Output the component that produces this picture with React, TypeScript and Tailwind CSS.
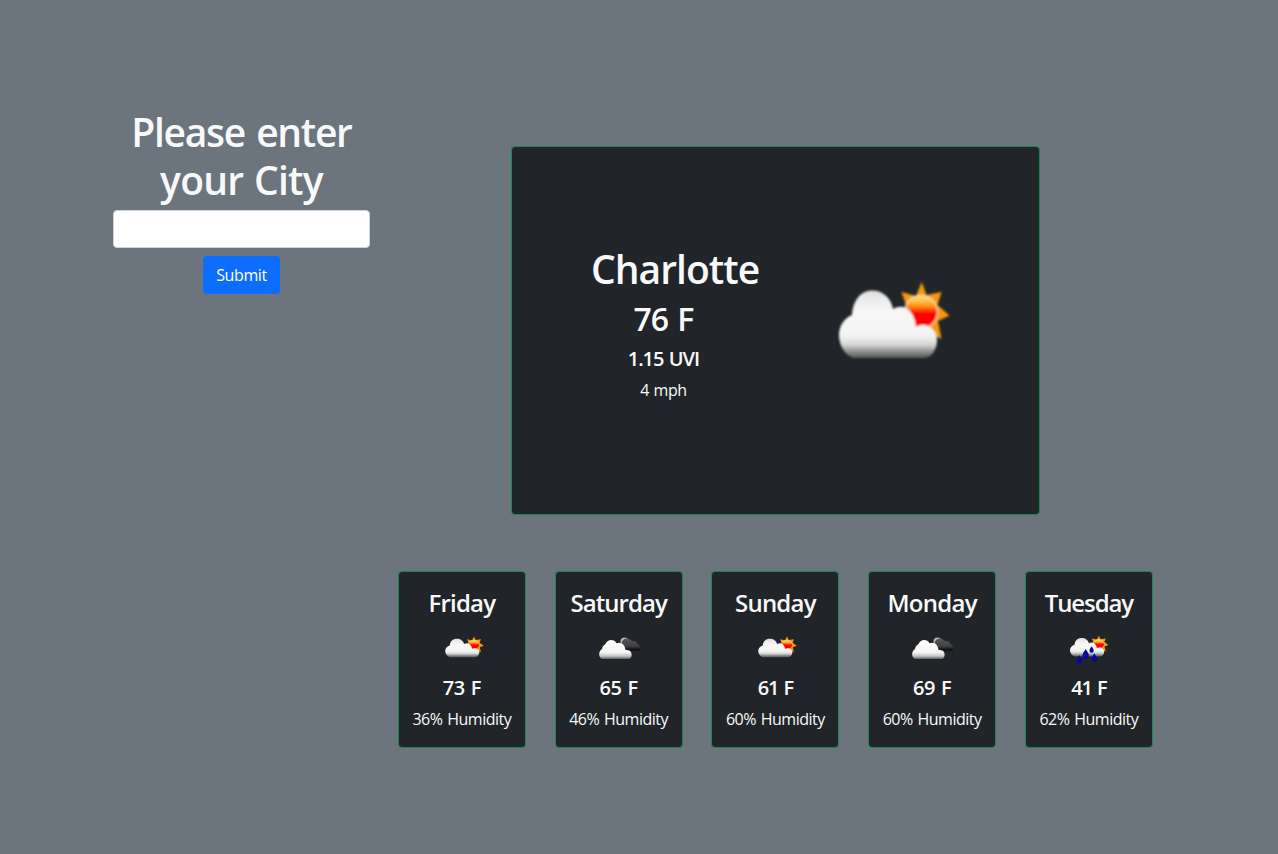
type IconKind = 'partly' | 'cloudy' | 'rain';

interface Day {
  name: string;
  icon: IconKind;
  temp: number;
  humidity: number;
  nameTracking: string;
  tempTracking: string;
}

const days: Day[] = [
  { name: 'Friday', icon: 'partly', temp: 73, humidity: 36, nameTracking: 'tracking-[-0.8px]', tempTracking: 'tracking-[-0.4px]' },
  { name: 'Saturday', icon: 'cloudy', temp: 65, humidity: 46, nameTracking: 'tracking-[-0.95px]', tempTracking: 'tracking-[-0.4px]' },
  { name: 'Sunday', icon: 'partly', temp: 61, humidity: 60, nameTracking: 'tracking-[-0.8px]', tempTracking: 'tracking-[-1.1px]' },
  { name: 'Monday', icon: 'cloudy', temp: 69, humidity: 60, nameTracking: 'tracking-[-0.7px]', tempTracking: 'tracking-[-0.4px]' },
  { name: 'Tuesday', icon: 'rain', temp: 41, humidity: 62, nameTracking: 'tracking-[-1.1px]', tempTracking: 'tracking-[-1.1px]' },
];

// Gradients shared by every weather icon on the page.
function IconDefs() {
  return (
    <svg width="0" height="0" className="absolute" aria-hidden="true">
      <defs>
        <linearGradient id="cloud" x1="0" y1="0" x2="0" y2="1">
          <stop offset="0" stopColor="#dcdcdc" />
          <stop offset="0.12" stopColor="#ebebeb" />
          <stop offset="0.35" stopColor="#f8f8f8" />
          <stop offset="0.68" stopColor="#f2f2f2" />
          <stop offset="0.8" stopColor="#d6d6d6" />
          <stop offset="0.92" stopColor="#858585" />
          <stop offset="1" stopColor="#555658" />
        </linearGradient>
        <linearGradient id="white" x1="0" y1="0" x2="0" y2="1">
          <stop offset="0" stopColor="#ffffff" />
          <stop offset="0.65" stopColor="#f4f4f4" />
          <stop offset="0.85" stopColor="#c4c4c4" />
          <stop offset="1" stopColor="#5c5c5c" />
        </linearGradient>
        <linearGradient id="dark" x1="0" y1="0" x2="0" y2="1">
          <stop offset="0" stopColor="#585858" />
          <stop offset="0.65" stopColor="#404040" />
          <stop offset="1" stopColor="#050505" />
        </linearGradient>
        <linearGradient id="sun" x1="0" y1="0" x2="0" y2="1">
          <stop offset="0" stopColor="#ffd978" />
          <stop offset="0.18" stopColor="#ffc04a" />
          <stop offset="0.34" stopColor="#ff8a10" />
          <stop offset="0.46" stopColor="#ff3c00" />
          <stop offset="0.54" stopColor="#ff0000" />
          <stop offset="1" stopColor="#ff0000" />
        </linearGradient>
        <filter id="soft" x="-10%" y="-10%" width="120%" height="120%">
          <feGaussianBlur stdDeviation="0.8" />
        </filter>
      </defs>
    </svg>
  );
}

function Sun() {
  return (
    <g>
      <path
        d="M101.700 12 L106.500 25 L121.500 22 L117.500 35 L129.500 45.500 L118 51 L121.500 69 L110 63 L90 55 L87 38 L81.500 22 L96 26 Z"
        fill="#f5980f"
      />
      <circle cx="101" cy="42" r="16.500" fill="url(#sun)" stroke="#f7d7a8" strokeWidth="1.300" />
    </g>
  );
}

function CloudShape() {
  return (
    <path
      d="M34 88 C25 86 19 75 19 65 C19 55 25 48 32 45 C33 30 41 20.500 52 20.500 C63 20.500 71 28 73 39 C83 33 94 39 96 57 C107 51 117 60 117 70 C117 79 112 87 105 88 Z"
      fill="url(#cloud)"
    />
  );
}

function PartlyArt() {
  return (
    <>
      <Sun />
      <CloudShape />
    </>
  );
}

function SmallIcon({ kind }: { kind: IconKind }) {
  return (
    <svg width="50" height="50" viewBox="0 0 50 50" className="block overflow-visible">
      {kind === 'partly' && (
        <g transform="translate(1.6 7.200) scale(0.3486 0.2738)">
          <PartlyArt />
        </g>
      )}
      {kind === 'cloudy' && (
        <g>
          <circle cx="30.500" cy="15.500" r="4" fill="#b5b5b5" />
          <path
            d="M28 20 C26.500 15 30.500 11.800 33.500 12.500 C36 12.800 37.500 14.300 38 15.300 C41 14.600 43 16 43 18 C46 18.500 46.800 22 45.500 24.500 H36 Z"
            fill="url(#dark)"
          />
          <path
            d="M8 33 C4.500 31.500 4 25.500 8 23 C8.800 19 10.500 19 11.500 18 C13.500 12.800 20.500 12.800 22.500 17.300 C27 15.500 31 18.500 31.500 24 C36 23.300 38.300 26.500 37.500 30 C37 32 36 33 34.500 33 Z"
            fill="url(#white)"
          />
        </g>
      )}
      {kind === 'rain' && (
        <g>
          <g transform="translate(-0.6 6.500) scale(0.3486 0.2738)">
            <PartlyArt />
          </g>
          <g fill="#08089c">
            <path d="M21.700 23 C23 25.500 24.900 26.800 24.900 29.400 A3.200 3.500 0 0 1 18.500 29.400 C18.500 26.800 20.400 25.500 21.700 23 Z" />
            <path d="M27.600 20.300 C28.400 22 29.700 22.600 29.700 24.400 A2.100 2.300 0 0 1 25.500 24.400 C25.500 22.600 26.800 22 27.600 20.300 Z" />
            <path d="M15.300 29.300 C16.200 31.500 18 32.400 18 34.700 A2.700 2.900 0 0 1 12.600 34.700 C12.600 32.400 14.400 31.500 15.300 29.300 Z" />
            <path d="M30.300 27.300 C31.200 29.500 33 30.400 33 32.700 A2.700 2.900 0 0 1 27.600 32.700 C27.600 30.400 29.400 29.500 30.300 27.300 Z" />
          </g>
        </g>
      )}
    </svg>
  );
}

function SearchForm() {
  return (
    <form className="mt-[108px] ml-[113px] flex w-[257px] flex-col items-center" onSubmit={(e) => e.preventDefault()}>
      <h1 className="mb-1.5 flex flex-col items-center text-[39px] leading-[48px] font-semibold">
        <span className="tracking-[-1.3px] [word-spacing:2.4px]">Please enter</span>
        <span className="tracking-[-0.7px] [word-spacing:1px]">your City</span>
      </h1>
      <input
        aria-label="City"
        className="mb-2 h-[38px] w-full rounded border border-[#ced4da] bg-white px-3 text-[#212529]"
      />
      <button className="h-[38px] w-[77px] rounded bg-[#0d6efd] text-base tracking-[-0.4px] text-white">Submit</button>
    </form>
  );
}

function CurrentWeather() {
  return (
    <section className="flex h-[369px] w-[529px] items-start rounded border border-[#198754] bg-[#212529]">
      <div className="mt-[98px] ml-[79px] flex w-[145px] flex-col items-center">
        <h1 className="mb-[7px] self-start text-[39px] leading-[48px] font-semibold tracking-[-0.95px] whitespace-nowrap">
          Charlotte
        </h1>
        <h2 className="mb-[9px] text-[32px] leading-[38px] font-semibold tracking-[-0.9px] [word-spacing:1.5px]">76 F</h2>
        <h5 className="mb-[7px] text-xl leading-6 font-semibold tracking-[-1.1px] [word-spacing:1.5px]">1.15 UVI</h5>
        <p className="text-base leading-6 tracking-[-0.5px] [word-spacing:1px]">4 mph</p>
      </div>
      <svg width="150" height="110" viewBox="0 0 150 110" className="mt-[123px] ml-[84px] block">
        <g filter="url(#soft)">
          <PartlyArt />
        </g>
      </svg>
    </section>
  );
}

function DayCard({ day }: { day: Day }) {
  return (
    <article className="flex h-[177px] w-[128px] flex-col items-center rounded border border-[#198754] bg-[#212529] pt-4 whitespace-nowrap">
      <h4 className={`mb-[9px] text-2xl leading-[29px] font-semibold ${day.nameTracking}`}>{day.name}</h4>
      <SmallIcon kind={day.icon} />
      <h5 className={`mb-[7px] text-xl leading-6 font-semibold [word-spacing:1px] ${day.tempTracking}`}>{day.temp} F</h5>
      <p className="text-base leading-6 tracking-[-0.48px] [word-spacing:1px]">{day.humidity}% Humidity</p>
    </article>
  );
}

export default function App() {
  return (
    <main className="flex h-[854px] w-[1278px] items-start overflow-hidden bg-[#6c757d] font-['Open_Sans','Noto_Sans',sans-serif] text-[#f8f9fa]">
      <IconDefs />
      <SearchForm />
      <div className="mt-[146px] ml-[27.9px] flex w-[755px] flex-col items-center">
        <CurrentWeather />
        <div className="mt-[56px] flex w-full justify-between">
          {days.map((day) => (
            <DayCard key={day.name} day={day} />
          ))}
        </div>
      </div>
    </main>
  );
}
